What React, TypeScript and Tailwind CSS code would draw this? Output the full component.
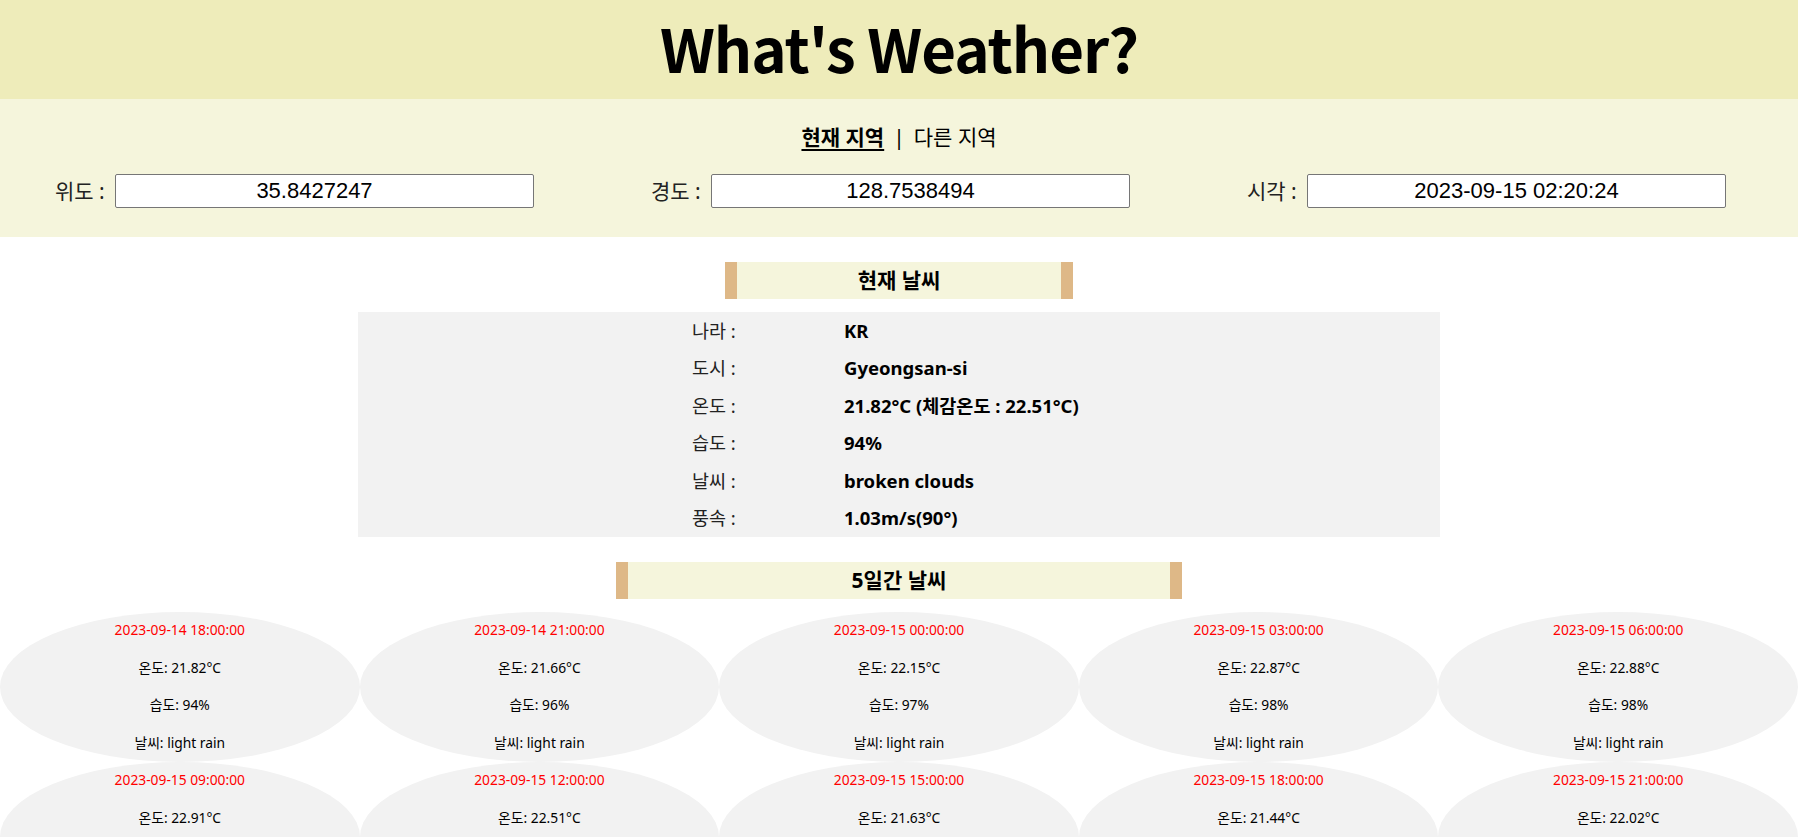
import React from "react";

const forecasts = [
  { t: "2023-09-14 18:00:00", temp: "21.82", hum: "94", w: "light rain" },
  { t: "2023-09-14 21:00:00", temp: "21.66", hum: "96", w: "light rain" },
  { t: "2023-09-15 00:00:00", temp: "22.15", hum: "97", w: "light rain" },
  { t: "2023-09-15 03:00:00", temp: "22.87", hum: "98", w: "light rain" },
  { t: "2023-09-15 06:00:00", temp: "22.88", hum: "98", w: "light rain" },
  { t: "2023-09-15 09:00:00", temp: "22.91", hum: "98", w: "light rain" },
  { t: "2023-09-15 12:00:00", temp: "22.51", hum: "97", w: "light rain" },
  { t: "2023-09-15 15:00:00", temp: "21.63", hum: "98", w: "light rain" },
  { t: "2023-09-15 18:00:00", temp: "21.44", hum: "98", w: "light rain" },
  { t: "2023-09-15 21:00:00", temp: "22.02", hum: "97", w: "light rain" },
];

const rows: [string, string][] = [
  ["나라 :", "KR"],
  ["도시 :", "Gyeongsan-si"],
  ["온도 :", "21.82°C (체감온도 : 22.51°C)"],
  ["습도 :", "94%"],
  ["날씨 :", "broken clouds"],
  ["풍속 :", "1.03m/s(90°)"],
];

function Field({ label, value, numeric }: { label: string; value: string; numeric?: boolean }) {
  return (
    <div className="flex items-center w-[479px]">
      <span className="w-[60px] shrink-0 text-[21px] text-[#222] leading-none">{label}</span>
      <input
        readOnly
        value={value}
        className={
          numeric
            ? "w-[419px] h-[34px] bg-white border border-[#767676] rounded-[2px] pr-[20px] text-center text-[22px] text-black outline-none font-['Liberation_Sans',Arial,sans-serif]"
            : "w-[419px] h-[34px] bg-white border border-[#767676] rounded-[2px] text-center text-[22px] text-black outline-none font-['Liberation_Sans',Arial,sans-serif]"
        }
      />
    </div>
  );
}

export default function App() {
  return (
    <div className="min-h-screen bg-white text-black font-['Noto_Sans','Noto_Sans_CJK_KR',sans-serif]">
      <header className="h-[99px] bg-[#eeecba] flex items-center justify-center">
        <h1 className="text-[60px] tracking-[-1px] font-bold leading-none font-['Noto_Sans_CJK_KR','Noto_Sans',sans-serif] pb-[6px]">
          What&apos;s Weather?
        </h1>
      </header>

      <section className="h-[138px] bg-[#f5f5dc] pt-[24px]">
        <nav className="flex items-center justify-center h-[28px] text-[21px] leading-none gap-[9px]">
          <span className="font-bold underline underline-offset-[4px] decoration-[2px]">현재 지역</span>
          <span>|</span>
          <span>다른 지역</span>
        </nav>
        <div className="flex items-center pl-[55px] gap-[117px] mt-[23px]">
          <Field label="위도 :" value="35.8427247" numeric />
          <Field label="경도 :" value="128.7538494" numeric />
          <Field label="시각 :" value="2023-09-15 02:20:24" />
        </div>
      </section>

      <div className="flex justify-center mt-[25px]">
        <div className="w-[348px] h-[37px] bg-[#f5f5dc] border-x-[12px] border-[#deb887] flex items-center justify-center text-[21px] font-bold">
          현재 날씨
        </div>
      </div>

      <div className="mx-auto mt-[13px] w-[1082px] bg-[#f2f2f2]">
        {rows.map(([k, v]) => (
          <div key={k} className="h-[37.5px] flex items-center">
            <span className="ml-[334px] w-[152px] text-[18.5px] text-[#222]">{k}</span>
            <span className="text-[18.5px] font-bold">{v}</span>
          </div>
        ))}
      </div>

      <div className="flex justify-center mt-[25px]">
        <div className="w-[566px] h-[37px] bg-[#f5f5dc] border-x-[12px] border-[#deb887] flex items-center justify-center text-[21px] font-bold">
          5일간 날씨
        </div>
      </div>

      <div className="grid grid-cols-5 mt-[13px]">
        {forecasts.map((f) => (
          <div
            key={f.t}
            className="h-[150px] rounded-[50%] bg-[#f2f2f2] flex flex-col items-center text-[13.8px]"
          >
            <div className="h-[37.5px] flex items-center text-[#ff0000]">{f.t}</div>
            <div className="h-[37.5px] flex items-center">온도: {f.temp}°C</div>
            <div className="h-[37.5px] flex items-center">습도: {f.hum}%</div>
            <div className="h-[37.5px] flex items-center">날씨: {f.w}</div>
          </div>
        ))}
      </div>
    </div>
  );
}
